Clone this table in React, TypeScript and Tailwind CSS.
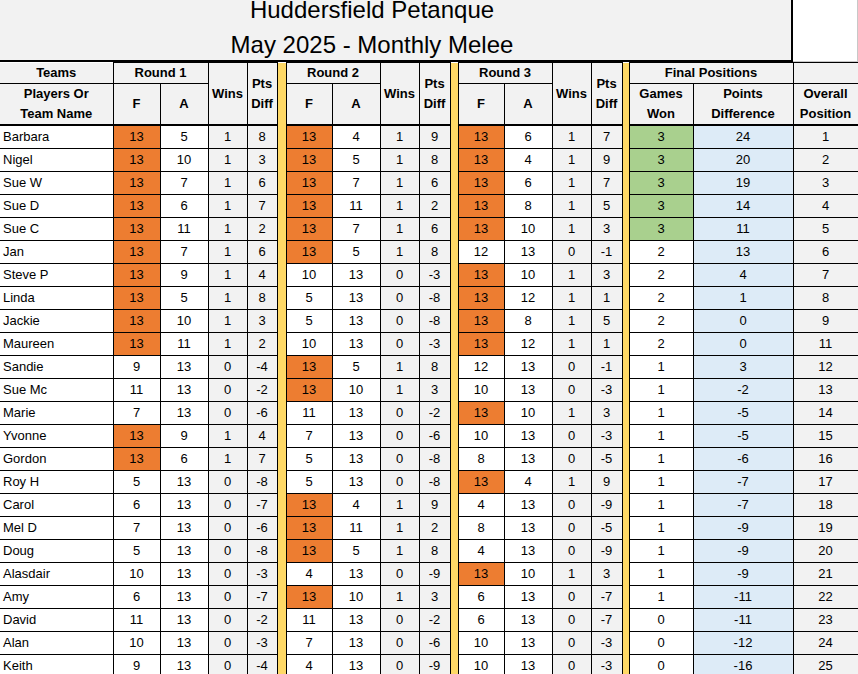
import React from "react";

type Row = [string, number, number, number, number, number, number, number, number, number, number, number, number, number, number, number];

const rows: Row[] = [
  ["Barbara", 13, 5, 1, 8, 13, 4, 1, 9, 13, 6, 1, 7, 3, 24, 1],
  ["Nigel", 13, 10, 1, 3, 13, 5, 1, 8, 13, 4, 1, 9, 3, 20, 2],
  ["Sue W", 13, 7, 1, 6, 13, 7, 1, 6, 13, 6, 1, 7, 3, 19, 3],
  ["Sue D", 13, 6, 1, 7, 13, 11, 1, 2, 13, 8, 1, 5, 3, 14, 4],
  ["Sue C", 13, 11, 1, 2, 13, 7, 1, 6, 13, 10, 1, 3, 3, 11, 5],
  ["Jan", 13, 7, 1, 6, 13, 5, 1, 8, 12, 13, 0, -1, 2, 13, 6],
  ["Steve P", 13, 9, 1, 4, 10, 13, 0, -3, 13, 10, 1, 3, 2, 4, 7],
  ["Linda", 13, 5, 1, 8, 5, 13, 0, -8, 13, 12, 1, 1, 2, 1, 8],
  ["Jackie", 13, 10, 1, 3, 5, 13, 0, -8, 13, 8, 1, 5, 2, 0, 9],
  ["Maureen", 13, 11, 1, 2, 10, 13, 0, -3, 13, 12, 1, 1, 2, 0, 11],
  ["Sandie", 9, 13, 0, -4, 13, 5, 1, 8, 12, 13, 0, -1, 1, 3, 12],
  ["Sue Mc", 11, 13, 0, -2, 13, 10, 1, 3, 10, 13, 0, -3, 1, -2, 13],
  ["Marie", 7, 13, 0, -6, 11, 13, 0, -2, 13, 10, 1, 3, 1, -5, 14],
  ["Yvonne", 13, 9, 1, 4, 7, 13, 0, -6, 10, 13, 0, -3, 1, -5, 15],
  ["Gordon", 13, 6, 1, 7, 5, 13, 0, -8, 8, 13, 0, -5, 1, -6, 16],
  ["Roy H", 5, 13, 0, -8, 5, 13, 0, -8, 13, 4, 1, 9, 1, -7, 17],
  ["Carol", 6, 13, 0, -7, 13, 4, 1, 9, 4, 13, 0, -9, 1, -7, 18],
  ["Mel D", 7, 13, 0, -6, 13, 11, 1, 2, 8, 13, 0, -5, 1, -9, 19],
  ["Doug", 5, 13, 0, -8, 13, 5, 1, 8, 4, 13, 0, -9, 1, -9, 20],
  ["Alasdair", 10, 13, 0, -3, 4, 13, 0, -9, 13, 10, 1, 3, 1, -9, 21],
  ["Amy", 6, 13, 0, -7, 13, 10, 1, 3, 6, 13, 0, -7, 1, -11, 22],
  ["David", 11, 13, 0, -2, 11, 13, 0, -2, 6, 13, 0, -7, 0, -11, 23],
  ["Alan", 10, 13, 0, -3, 7, 13, 0, -6, 10, 13, 0, -3, 0, -12, 24],
  ["Keith", 9, 13, 0, -4, 4, 13, 0, -9, 10, 13, 0, -3, 0, -16, 25],
];

const widths = [113, 47, 48, 39, 30, 9, 46, 48, 39, 31, 8, 46, 48, 39, 31, 7, 64, 100, 65];

const th = "border border-black bg-[#f2f2f2] font-bold text-[13px] leading-[20px] text-center align-middle p-0";
const td = "border border-black text-center align-middle p-0 h-[23px]";
const yellow = "border-x border-y-0 border-black bg-[#ffd966] p-0";

function RoundCells({ f, a, w, d }: { f: number; a: number; w: number; d: number }) {
  return (
    <>
      <td className={`${td} ${w === 1 ? "bg-[#ed7d31]" : "bg-white"}`}>{f}</td>
      <td className={`${td} bg-white`}>{a}</td>
      <td className={`${td} bg-[#f2f2f2]`}>{w}</td>
      <td className={`${td} bg-[#f2f2f2]`}>{d}</td>
    </>
  );
}

export default function App() {
  return (
    <div
      className="w-[858px] h-[674px] overflow-hidden bg-white text-black"
      style={{ fontFamily: '"Liberation Sans", Arial, sans-serif' }}
    >
      {/* Title block */}
      <div className="flex">
        <div className="w-[793px] h-[62px] overflow-hidden bg-[#f2f2f2] border-b-2 border-r-2 border-black pr-[47px] flex flex-col items-center text-[24px] leading-[35px]">
          <div className="-mt-[8px]">Huddersfield Petanque</div>
          <div>May 2025 - Monthly Melee</div>
        </div>
        <div className="w-[65px] h-[62px] bg-white border-b border-r border-[#c8c8c8]" />
      </div>

      <table className="table-fixed border-collapse w-[858px] text-[13px]">
        <colgroup>
          {widths.map((w, i) => (
            <col key={i} style={{ width: w }} />
          ))}
        </colgroup>
        <thead>
          <tr className="h-[19px]">
            <th className={`${th} border-t-0 border-l-0`}>Teams</th>
            <th className={th} colSpan={2}>Round 1</th>
            <th className={`${th} border-b-2`} rowSpan={2}>Wins</th>
            <th className={`${th} border-b-2`} rowSpan={2}>Pts<br />Diff</th>
            <td className={yellow} rowSpan={2} />
            <th className={th} colSpan={2}>Round 2</th>
            <th className={`${th} border-b-2`} rowSpan={2}>Wins</th>
            <th className={`${th} border-b-2`} rowSpan={2}>Pts<br />Diff</th>
            <td className={yellow} rowSpan={2} />
            <th className={th} colSpan={2}>Round 3</th>
            <th className={`${th} border-b-2`} rowSpan={2}>Wins</th>
            <th className={`${th} border-b-2`} rowSpan={2}>Pts<br />Diff</th>
            <td className={yellow} rowSpan={2} />
            <th className={th} colSpan={2}>Final Positions</th>
            <th className={`${th} border-[#c8c8c8]`} />
          </tr>
          <tr className="h-[41px]">
            <th className={`${th} border-l-0 border-b-2`}>Players Or<br />Team Name</th>
            <th className={`${th} border-b-2`}>F</th>
            <th className={`${th} border-b-2`}>A</th>
            <th className={`${th} border-b-2`}>F</th>
            <th className={`${th} border-b-2`}>A</th>
            <th className={`${th} border-b-2`}>F</th>
            <th className={`${th} border-b-2`}>A</th>
            <th className={`${th} border-b-2`}>Games<br />Won</th>
            <th className={`${th} border-b-2`}>Points<br />Difference</th>
            <th className={`${th} border-b-2 border-r-[#c8c8c8]`}>Overall<br />Position</th>
          </tr>
        </thead>
        <tbody>
          {rows.map((r) => (
            <tr key={r[0]}>
              <td className={`${td} border-l-0 bg-white text-left pl-[3px]`}>{r[0]}</td>
              <RoundCells f={r[1]} a={r[2]} w={r[3]} d={r[4]} />
              <td className={yellow} />
              <RoundCells f={r[5]} a={r[6]} w={r[7]} d={r[8]} />
              <td className={yellow} />
              <RoundCells f={r[9]} a={r[10]} w={r[11]} d={r[12]} />
              <td className={yellow} />
              <td className={`${td} ${r[13] === 3 ? "bg-[#a9d08e]" : "bg-white"}`}>{r[13]}</td>
              <td className={`${td} bg-[#ddebf7]`}>{r[14]}</td>
              <td className={`${td} bg-[#f2f2f2] border-r-[#c8c8c8]`}>{r[15]}</td>
            </tr>
          ))}
        </tbody>
      </table>
    </div>
  );
}
